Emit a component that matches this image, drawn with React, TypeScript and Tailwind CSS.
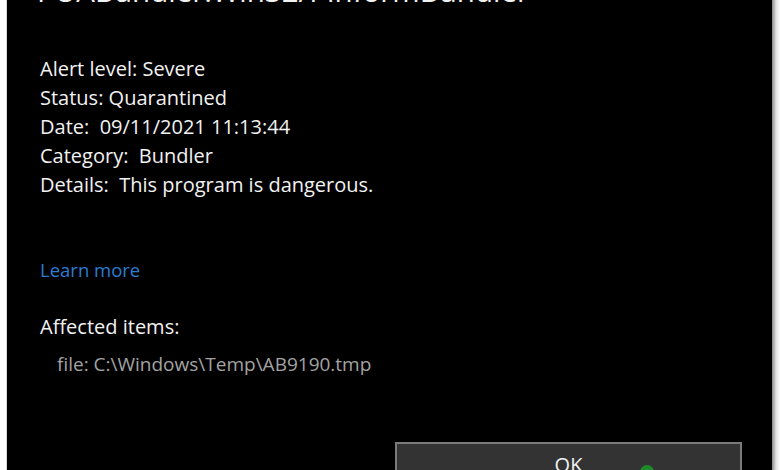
import React from "react";

export default function App() {
  const font = { fontFamily: '"Open Sans", "Noto Sans", sans-serif' };
  return (
    <div className="w-[780px] h-[470px] overflow-hidden bg-white flex" style={font}>
      <div className="w-[6px] shrink-0 bg-white" />
      <div className="w-[1px] shrink-0 bg-[#d8d8d8]" />
      <div className="w-[765px] shrink-0 bg-black flex flex-col text-[#f2f2f2]">
        <div className="-mt-[25px] pl-[30px] text-[29.5px] leading-[32px] whitespace-nowrap">
          PUABundler:Win32/PinformBundler
        </div>
        <div className="pl-[33px] mt-[47px] flex flex-col text-[20px] leading-[29px]">
          <div>Alert level: Severe</div>
          <div>Status: Quarantined</div>
          <div>Date:&nbsp; 09/11/2021 11:13:44</div>
          <div>Category:&nbsp; Bundler</div>
          <div>Details:&nbsp; This program is dangerous.</div>
        </div>
        <div className="pl-[33px] mt-[56px] text-[18.5px] leading-[29px] text-[#2b7cd3]">Learn more</div>
        <div className="pl-[33px] mt-[28px] text-[20px] leading-[29px]">Affected items:</div>
        <div className="pl-[50px] mt-[9px] text-[19px] leading-[29px] text-[#a3a3a3]">
          file: C:\Windows\Temp\AB9190.tmp
        </div>
        <div className="flex justify-end pr-[30px] mt-[63px]">
          <div className="relative w-[347px] h-[40px] shrink-0 border-2 border-[#7b7b7b] bg-[#333333] flex justify-center">
            <span className="mt-[10px] text-[20px] leading-[22px] text-[#f2f2f2]">OK</span>
            <span className="absolute left-[243px] top-[21px] w-[14px] h-[14px] rounded-full bg-[#1f8a2a]" />
          </div>
        </div>
      </div>
      <div className="w-[8px] shrink-0 bg-gradient-to-r from-[#8a8a8a] via-[#e0e0e0] to-white" />
    </div>
  );
}
